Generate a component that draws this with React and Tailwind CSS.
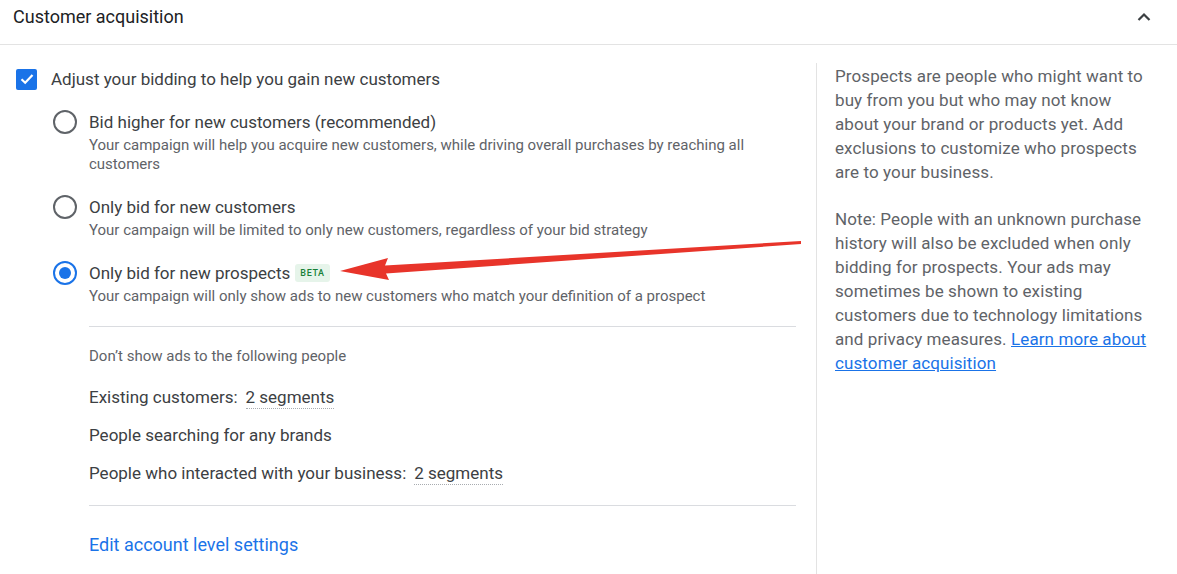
import React, { useState } from "react";

const font = { fontFamily: "Roboto, 'Noto Sans', sans-serif" };

const options = [
  {
    id: "higher",
    label: "Bid higher for new customers (recommended)",
    desc: "Your campaign will help you acquire new customers, while driving overall purchases by reaching all customers",
  },
  {
    id: "new",
    label: "Only bid for new customers",
    desc: "Your campaign will be limited to only new customers, regardless of your bid strategy",
  },
  {
    id: "prospects",
    label: "Only bid for new prospects",
    desc: "Your campaign will only show ads to new customers who match your definition of a prospect",
    beta: true,
  },
];

const Radio = ({ checked }) => (
  <span
    className={
      "flex h-[24px] w-[24px] shrink-0 items-center justify-center rounded-full border-2 " +
      (checked ? "border-[#1a73e8]" : "border-[#5f6368]")
    }
  >
    {checked && <span className="h-[12px] w-[12px] rounded-full bg-[#1a73e8]"></span>}
  </span>
);

const Segments = () => (
  <span className="ml-[8px] border-b border-dotted border-[#a8acb0] pb-[1px] leading-[20px]">2 segments</span>
);

const App = () => {
  const [selected, setSelected] = useState("prospects");

  return (
    <div className="relative h-[574px] w-[1177px] overflow-hidden bg-white" style={font}>
      <div className="flex h-[45px] items-start justify-between border-b border-[#e3e3e3] pl-[13px] pr-[26px] pt-[5px]">
        <span className="text-[18px] leading-[24px] text-[#202124]">Customer acquisition</span>
        <svg className="mt-[7px]" width="14" height="10" viewBox="0 0 14 10">
          <path d="M1.5 8 L7 2.5 L12.5 8" fill="none" stroke="#3c4043" strokeWidth="2.2" />
        </svg>
      </div>

      <div className="mt-[18px] flex">
        <div className="w-[816px] shrink-0 pl-[16px] pt-[4px] text-[#3c4043]">
          <div className="flex items-center gap-[14px]">
            <span className="flex h-[21px] w-[21px] items-center justify-center rounded-[2px] bg-[#1a73e8]">
              <svg width="14" height="12" viewBox="0 0 14 12">
                <path d="M1.5 6.2 L5.2 9.8 L12.5 2" fill="none" stroke="white" strokeWidth="2.2" />
              </svg>
            </span>
            <span className="text-[17px] leading-[24px]">Adjust your bidding to help you gain new customers</span>
          </div>

          <div className="ml-[37px] mt-[19px] flex flex-col gap-[21px]">
            {options.map((o) => (
              <div key={o.id} className="flex cursor-pointer gap-[12px]" onClick={() => setSelected(o.id)}>
                <Radio checked={selected === o.id} />
                <div className="w-[707px]">
                  <div className="flex items-center text-[17px] leading-[24px] text-[#3c4043]">
                    {o.label}
                    {o.beta && (
                      <span className="ml-[5px] rounded-[3px] bg-[#e6f4ea] px-[5px] py-[2px] text-[9px] font-medium leading-[14px] tracking-[0.6px] text-[#188038]">
                        BETA
                      </span>
                    )}
                  </div>
                  <div className="mt-[2px] text-[15px] leading-[19px] text-[#5f6368]">{o.desc}</div>
                </div>
              </div>
            ))}
          </div>

          <div className="ml-[73px] w-[707px]">
            <div className="mt-[20px] border-t border-[#dadce0]"></div>
            <div className="mt-[19px] text-[15px] leading-[20px] text-[#5f6368]">
              Don’t show ads to the following people
            </div>
            <div className="mt-[19px] flex flex-col gap-[14px] text-[17px] leading-[24px] text-[#3c4043]">
              <div>
                Existing customers:
                <Segments />
              </div>
              <div>People searching for any brands</div>
              <div>
                People who interacted with your business:
                <Segments />
              </div>
            </div>
            <div className="mt-[20px] border-t border-[#dadce0]"></div>
            <div className="mt-[27px] text-[18px] leading-[24px] text-[#1a73e8]">Edit account level settings</div>
          </div>
        </div>

        <div className="h-[520px] border-l border-[#e3e3e3] pl-[18px] pt-[1px] text-[17px] leading-[24px] tracking-[0.1px] text-[#5f6368]">
          <p className="w-[318px]">
            Prospects are people who might want to buy from you but who may not know about your brand or products yet. Add
            exclusions to customize who prospects are to your business.
          </p>
          <p className="mt-[23px] w-[318px]">
            Note: People with an unknown purchase history will also be excluded when only bidding for prospects. Your ads
            may sometimes be shown to existing customers due to technology limitations and privacy measures.{" "}
            <span className="text-[#1a73e8] underline">Learn more about customer acquisition</span>
          </p>
        </div>
      </div>

      <svg className="pointer-events-none absolute left-0 top-0" width="1177" height="574" viewBox="0 0 1177 574">
        <polygon
          points="340,271 388,258 385,265.5 801,241 801,244 386,273.5 389,280"
          fill="#e8342a"
        />
      </svg>
    </div>
  );
};

export default App;
